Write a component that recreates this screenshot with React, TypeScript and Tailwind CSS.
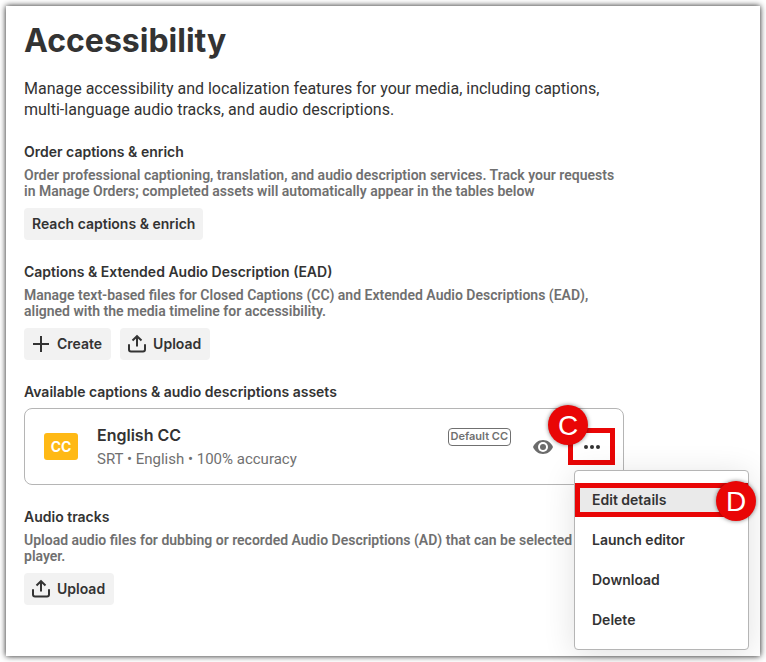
import React from 'react';

const menuItems = ['Edit details', 'Launch editor', 'Download', 'Delete'];

const UploadIcon: React.FC = () => (
    <svg width="20" height="20" viewBox="0 0 20 20" fill="none" stroke="#333333" strokeWidth="2" aria-hidden="true">
        <path d="M2 11V15.5Q2 17.5 4 17.5H16Q18 17.5 18 15.5V11" strokeLinecap="round" />
        <path d="M10 12.5V3M5.5 6.5L10 2.2L14.5 6.5" />
    </svg>
);

const PlusIcon: React.FC = () => (
    <svg width="20" height="20" viewBox="0 0 20 20" fill="none" stroke="#333333" strokeWidth="2" aria-hidden="true">
        <path d="M10 2V18M2 10H18" />
    </svg>
);

const EyeIcon: React.FC = () => (
    <svg width="20" height="14" viewBox="0 0 20 14" aria-hidden="true">
        <path d="M10 0C5.5 0 1.7 2.8 0 7C1.7 11.2 5.5 14 10 14S18.3 11.2 20 7C18.3 2.8 14.5 0 10 0Z" fill="#6b6b6b" />
        <circle cx="10" cy="7" r="5" fill="white" />
        <circle cx="10" cy="7" r="3" fill="#6b6b6b" />
    </svg>
);

const Marker: React.FC<{ letter: string; className: string }> = ({ letter, className }) => (
    <span
        className={`absolute z-20 flex size-10 items-center justify-center rounded-full bg-[#e90606] pt-0.5 font-['Liberation_Sans',sans-serif] text-[28px] font-normal text-white shadow-[0_0_4px_rgba(0,0,0,0.5)] ${className}`}
    >
        {letter}
    </span>
);

const Button: React.FC<{ icon?: React.ReactNode; children: React.ReactNode }> = ({ icon, children }) => (
    <button
        type="button"
        className={`flex h-8 items-center gap-1.5 rounded bg-[#f2f2f2] text-sm font-semibold ${icon ? 'pr-[9px] pl-[7px]' : 'px-2'}`}
    >
        {icon}
        {children}
    </button>
);

const Section: React.FC<{ title: string; text: React.ReactNode; children: React.ReactNode }> = ({ title, text, children }) => (
    <section className="mb-[22px]">
        <h2 className="text-sm font-semibold">{title}</h2>
        <p className="mt-[5px] font-['Roboto',sans-serif] text-sm leading-4 font-semibold whitespace-nowrap text-[#707070]">{text}</p>
        <div className="mt-[9px] flex gap-[9px]">{children}</div>
    </section>
);

const App: React.FC = () => {
    return (
        <div className="bg-white p-1.5 font-['Inter',sans-serif] text-[#333333]">
            <main className="min-h-[650px] bg-white px-[18px] pt-[17px] shadow-[0_0_6px_rgba(0,0,0,0.9)]">
                <h1 className="text-[32px] leading-9 font-bold">Accessibility</h1>
                <p className="mt-[19px] mb-[22px] font-['Roboto',sans-serif] text-base leading-[21px] whitespace-nowrap">
                    Manage accessibility and localization features for your media, including captions,
                    <br />
                    multi-language audio tracks, and audio descriptions.
                </p>

                <Section
                    title="Order captions & enrich"
                    text={
                        <>
                            Order professional captioning, translation, and audio description services. Track your requests
                            <br />
                            in Manage Orders; completed assets will automatically appear in the tables below
                        </>
                    }
                >
                    <Button>Reach captions &amp; enrich</Button>
                </Section>

                <Section
                    title="Captions & Extended Audio Description (EAD)"
                    text={
                        <>
                            Manage text-based files for Closed Captions (CC) and Extended Audio Descriptions (EAD),
                            <br />
                            aligned with the media timeline for accessibility.
                        </>
                    }
                >
                    <Button icon={<PlusIcon />}>Create</Button>
                    <Button icon={<UploadIcon />}>Upload</Button>
                </Section>

                <h2 className="text-sm font-semibold">Available captions &amp; audio descriptions assets</h2>
                <div className="mt-1.5 mb-[22px] flex h-[77px] max-w-[600px] items-center rounded-lg border border-[#b5b5b5] pr-2 pl-[19px]">
                    <div className="flex h-[27px] w-[34px] items-center justify-center rounded-[3px] bg-[#ffb915] text-sm font-bold text-white">
                        CC
                    </div>
                    <div className="ml-[19px] flex-1">
                        <h3 className="text-base leading-6 font-semibold">English CC</h3>
                        <p className="font-['Roboto',sans-serif] text-[15px] leading-6 text-[#707070]">SRT • English • 100% accuracy</p>
                    </div>
                    <span className="mb-5 flex h-[18px] items-center rounded border border-[#707070] px-0.5 text-[11px] font-semibold text-[#707070]">
                        Default CC
                    </span>
                    <button type="button" aria-label="Preview" className="ml-[22px]">
                        <EyeIcon />
                    </button>

                    {/* More actions */}
                    <div className="relative ml-[15px]">
                        <button
                            type="button"
                            aria-label="More actions"
                            className="flex h-[37px] w-[47px] items-center justify-center gap-0.5 border-5 border-[#e90606]"
                        >
                            <span className="size-1 rounded-full bg-[#333333]" />
                            <span className="size-1 rounded-full bg-[#333333]" />
                            <span className="size-1 rounded-full bg-[#333333]" />
                        </button>
                        <Marker letter="C" className="-top-[23px] -left-5" />

                        <div className="absolute top-[42px] left-1.5 z-10 w-[175px] rounded border border-[#b5b5b5] bg-white py-3 shadow-[0_4px_32px_rgba(0,0,0,0.12)]">
                            <ul className="flex flex-col gap-1.5">
                                {menuItems.map((item, i) => (
                                    <li key={item} className="relative">
                                        <button
                                            type="button"
                                            className={`flex h-[34px] w-full items-center text-left text-sm font-semibold ${i === 0 ? 'border-5 border-[#e90606] bg-[#eaeaea] pl-3' : 'pl-[17px]'}`}
                                        >
                                            {item}
                                        </button>
                                        {i === 0 && <Marker letter="D" className="-top-0.5 -right-2" />}
                                    </li>
                                ))}
                            </ul>
                        </div>
                    </div>
                </div>

                <Section
                    title="Audio tracks"
                    text={
                        <>
                            Upload audio files for dubbing or recorded Audio Descriptions (AD) that can be selected in
                            <br />
                            player.
                        </>
                    }
                >
                    <Button icon={<UploadIcon />}>Upload</Button>
                </Section>
            </main>
        </div>
    );
};

export default App;
